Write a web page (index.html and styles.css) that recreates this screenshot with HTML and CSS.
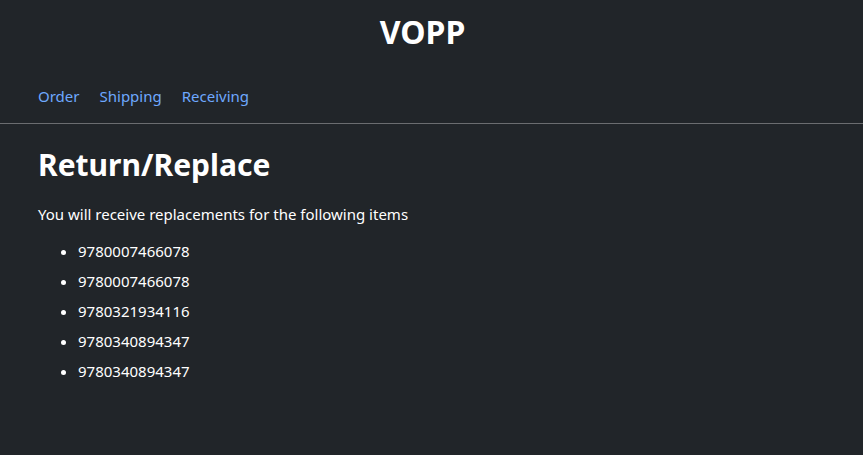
FILE: index.html
```html
<!DOCTYPE html>
<html lang="en">
<head>
<meta charset="utf-8">
<title>VOPP</title>
<link rel="stylesheet" href="styles.css">
</head>
<body>
<header class="site-header">
  <h1 class="brand">VOPP</h1>
  <nav class="nav">
    <a class="nav-link" href="#">Order</a>
    <a class="nav-link" href="#">Shipping</a>
    <a class="nav-link" href="#">Receiving</a>
  </nav>
</header>
<main class="content">
  <h2 class="page-title">Return/Replace</h2>
  <p class="lead-text">You will receive replacements for the following items</p>
  <ul class="items">
    <li>9780007466078</li>
    <li>9780007466078</li>
    <li>9780321934116</li>
    <li>9780340894347</li>
    <li>9780340894347</li>
  </ul>
</main>
</body>
</html>
```
FILE: styles.css
```css
html, body {
  margin: 0;
  padding: 0;
  background: #212529;
  color: #ffffff;
  font-family: "Noto Sans", "Open Sans", sans-serif;
  font-size: 15px;
  height: 100%;
}
.site-header {
  border-bottom: 1px solid #6b6d70;
}
.brand {
  margin: 0;
  padding: 10px 18px 0 0;
  text-align: center;
  font-size: 32px;
  font-weight: 700;
  line-height: 44px;
}
.nav {
  display: flex;
  padding: 30px 28px 15px;
}
.nav-link {
  color: #6ea8fe;
  text-decoration: none;
  padding: 0 10px;
  line-height: 24px;
}
.content {
  padding: 0 38px;
}
.page-title {
  margin: 19px 0 0;
  font-size: 30px;
  font-weight: 700;
  line-height: 44px;
}
.lead-text {
  margin: 15px 0 0;
  line-height: 24px;
}
.items {
  margin: 13px 0 0;
  padding-left: 40px;
}
.items li {
  line-height: 24px;
  margin-bottom: 6px;
}
```
